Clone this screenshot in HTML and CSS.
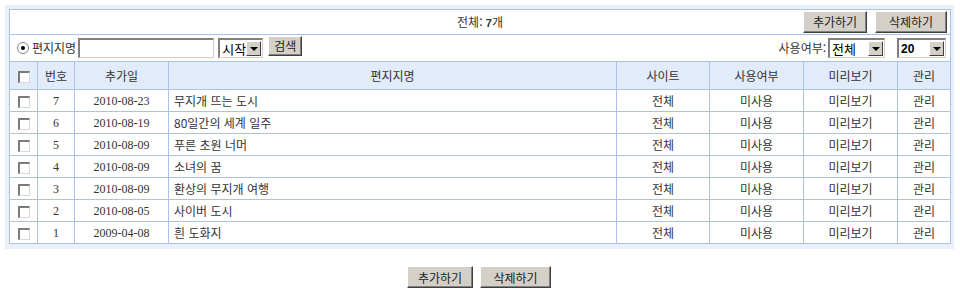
FILE: index.html
```html
<!DOCTYPE html>
<html lang="ko">
<head>
<meta charset="utf-8">
<link rel="stylesheet" href="styles.css">
</head>
<body>
<div class="frame">
<table class="list">
<colgroup>
<col class="c-chk"><col class="c-no"><col class="c-date"><col class="c-name"><col class="c-site"><col class="c-use"><col class="c-prev"><col class="c-man">
</colgroup>
<tr class="top-row">
<td colspan="8">
<div class="top-inner">
<span class="total">전체: <b>7</b>개</span>
<div class="top-btns"><span class="btn btn-add">추가하기</span><span class="btn btn-del">삭제하기</span></div>
</div>
</td>
</tr>
<tr class="search-row">
<td colspan="8">
<div class="search-inner">
<div class="search-left">
<span class="radio"><span class="dot"></span></span>
<span class="lbl">편지지명</span>
<span class="textbox"></span>
<span class="select sel-start"><span class="sel-val">시작</span><span class="arrow"></span></span>
<span class="btn btn-search">검색</span>
</div>
<div class="search-right">
<span class="lbl">사용여부:</span>
<span class="select sel-use"><span class="sel-val">전체</span><span class="arrow"></span></span>
<span class="select sel-num"><span class="sel-val">20</span><span class="arrow"></span></span>
</div>
</div>
</td>
</tr>
<tr class="head">
<th><span class="chk"></span></th><th>번호</th><th>추가일</th><th>편지지명</th><th>사이트</th><th>사용여부</th><th>미리보기</th><th>관리</th>
</tr>
<tr><td><span class="chk"></span></td><td class="num">7</td><td class="num">2010-08-23</td><td class="name">무지개 뜨는 도시</td><td>전체</td><td>미사용</td><td>미리보기</td><td>관리</td></tr>
<tr><td><span class="chk"></span></td><td class="num">6</td><td class="num">2010-08-19</td><td class="name">80일간의 세계 일주</td><td>전체</td><td>미사용</td><td>미리보기</td><td>관리</td></tr>
<tr><td><span class="chk"></span></td><td class="num">5</td><td class="num">2010-08-09</td><td class="name">푸른 초원 너머</td><td>전체</td><td>미사용</td><td>미리보기</td><td>관리</td></tr>
<tr><td><span class="chk"></span></td><td class="num">4</td><td class="num">2010-08-09</td><td class="name">소녀의 꿈</td><td>전체</td><td>미사용</td><td>미리보기</td><td>관리</td></tr>
<tr><td><span class="chk"></span></td><td class="num">3</td><td class="num">2010-08-09</td><td class="name">환상의 무지개 여행</td><td>전체</td><td>미사용</td><td>미리보기</td><td>관리</td></tr>
<tr><td><span class="chk"></span></td><td class="num">2</td><td class="num">2010-08-05</td><td class="name">사이버 도시</td><td>전체</td><td>미사용</td><td>미리보기</td><td>관리</td></tr>
<tr><td><span class="chk"></span></td><td class="num">1</td><td class="num">2009-04-08</td><td class="name">흰 도화지</td><td>전체</td><td>미사용</td><td>미리보기</td><td>관리</td></tr>
</table>
</div>
<div class="bottom-btns"><span class="btn btn-add">추가하기</span><span class="btn btn-del">삭제하기</span></div>
</body>
</html>
```
FILE: styles.css
```css
html, body {
  margin: 0;
  padding: 0;
  background: #fff;
}
body {
  font-family: "Noto Sans CJK KR", "Noto Sans", sans-serif;
  font-size: 12px;
  color: #333;
}
.frame {
  margin: 5px 6px 0 5px;
  padding: 4px 4px 5px 4px;
  background: #e9f0fb;
}
.list {
  width: 100%;
  border-collapse: collapse;
  background: #fff;
  table-layout: fixed;
}
.list td, .list th {
  border: 1px solid #aac2e7;
  padding: 0;
  text-align: center;
  height: 21px;
  font-weight: normal;
  line-height: 14px;
  white-space: nowrap;
}
.c-chk { width: 28px; }
.c-no { width: 37px; }
.c-date { width: 94px; }
.c-name { width: 448px; }
.c-site { width: 93px; }
.c-use { width: 94px; }
.c-prev { width: 94px; }
.c-man { width: 53px; }

.list .top-row td { height: 24px; }
.top-inner {
  position: relative;
  display: flex;
  justify-content: center;
  align-items: center;
  height: 24px;
}
.total b { font-weight: bold; font-family: "Liberation Sans", sans-serif; font-size: 11px; }
.top-btns {
  position: absolute;
  right: 3px;
  top: 1px;
  display: flex;
  gap: 8px;
}
.btn {
  display: inline-flex;
  align-items: center;
  justify-content: center;
  box-sizing: border-box;
  height: 22px;
  background: #d4d0c8;
  border-top: 1px solid #fff;
  border-left: 1px solid #fff;
  border-right: 1px solid #404040;
  border-bottom: 1px solid #404040;
  box-shadow: inset -1px -1px 0 #808080;
  color: #222;
  font-size: 12px;
}
.btn-add { width: 64px; }
.btn-del { width: 72px; }

.list .search-row td { height: 26px; }
.search-inner {
  display: flex;
  justify-content: space-between;
  align-items: center;
  height: 26px;
  padding: 0 4px 0 7px;
}
.search-left, .search-right {
  display: flex;
  align-items: center;
}
.radio {
  box-sizing: border-box;
  width: 12px;
  height: 12px;
  border-radius: 50%;
  border: 1px solid #808080;
  background: #fff;
  display: inline-flex;
  align-items: center;
  justify-content: center;
  margin-right: 3px;
}
.dot { width: 4px; height: 4px; border-radius: 50%; background: #000; }
.lbl { margin-right: 1px; }
.textbox {
  box-sizing: border-box;
  width: 136px;
  height: 20px;
  border-top: 2px solid #808080;
  border-left: 2px solid #808080;
  border-right: 1px solid #d4d0c8;
  border-bottom: 1px solid #d4d0c8;
  background: #fff;
  margin-left: 1px;
}
.select {
  box-sizing: border-box;
  height: 20px;
  display: inline-flex;
  align-items: center;
  justify-content: space-between;
  background: #fff;
  border-top: 2px solid #808080;
  border-left: 2px solid #808080;
  border-right: 1px solid #d4d0c8;
  border-bottom: 1px solid #d4d0c8;
  padding: 0 1px 0 2px;
  color: #000;
  font-size: 13px;
}
.sel-start { width: 45px; margin-left: 4px; }
.sel-use { width: 57px; margin-left: 1px; }
.sel-num { width: 49px; margin-left: 12px; }
.sel-num .sel-val { font-family: "Liberation Sans", sans-serif; font-weight: bold; font-size: 12px; }
.arrow {
  box-sizing: border-box;
  width: 15px;
  height: 15px;
  background: #d4d0c8;
  border-top: 1px solid #fff;
  border-left: 1px solid #fff;
  border-right: 1px solid #404040;
  border-bottom: 1px solid #404040;
  position: relative;
}
.arrow::after {
  content: "";
  position: absolute;
  left: 3px;
  top: 5px;
  border-left: 4px solid transparent;
  border-right: 4px solid transparent;
  border-top: 4px solid #000;
}
.btn-search { width: 34px; height: 20px; margin-left: 5px; margin-bottom: 4px; }

.list .head th { height: 27px; background: #e1ebfa; }
.chk {
  display: inline-block;
  box-sizing: border-box;
  width: 12px;
  height: 12px;
  border-top: 2px solid #7a7a7a;
  border-left: 2px solid #7a7a7a;
  border-right: 1px solid #d8d8d8;
  border-bottom: 1px solid #d8d8d8;
  background: #fff;
  vertical-align: middle;
}
.num {
  font-family: "Liberation Serif", serif;
  font-size: 12px;
  color: #333;
}
.list td.name { text-align: left; padding-left: 5px; }

.bottom-btns {
  display: flex;
  justify-content: center;
  gap: 7px;
  margin-top: 17px;
  padding-right: 2px;
}
.bottom-btns .btn-add { width: 66px; }
.bottom-btns .btn-del { width: 71px; }
```
